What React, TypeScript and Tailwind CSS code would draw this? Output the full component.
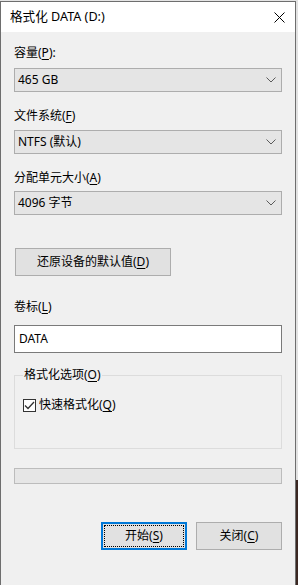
import { ReactNode } from 'react'

const FONT = '"Noto Sans", "Noto Sans CJK SC", sans-serif'

function Key({ k }: { k: string }) {
  return <span className="underline underline-offset-[2px] decoration-[1px]">{k}</span>
}

function Chevron() {
  return (
    <svg width="10" height="6" viewBox="0 0 10 6" className="shrink-0">
      <path d="M0.5 0.5 L5 5 L9.5 0.5" fill="none" stroke="#5a5a5a" strokeWidth="1" />
    </svg>
  )
}

function Combo({ value, className }: { value: string; className?: string }) {
  return (
    <div
      className={`h-[24px] bg-[#e5e5e5] border border-[#adadad] flex items-center justify-between pl-[3px] pr-[5px] ${className ?? ''}`}
    >
      <span className="text-[12px] leading-[16px] text-black">{value}</span>
      <Chevron />
    </div>
  )
}

function Label({ children, className }: { children: ReactNode; className?: string }) {
  return <div className={`text-[12px] leading-[16px] text-black ${className ?? ''}`}>{children}</div>
}

export default function App() {
  return (
    <div className="w-[298px] h-[585px] flex overflow-hidden bg-[#e4e4e4]" style={{ fontFamily: FONT }}>
      <div className="w-[296px] h-[585px] pt-[1px] flex flex-col">
        <div className="flex-1 flex flex-col border border-b-0 border-[#6e6e6e] bg-[#f0f0f0]">
          {/* title bar */}
          <div className="h-[30px] bg-white flex items-center justify-between pl-[9px] pr-[10px] shrink-0">
            <span className="text-[12.6px] leading-[16px] text-black">格式化 DATA (D:)</span>
            <svg width="11" height="11" viewBox="0 0 11 11">
              <path d="M0.5 0.5 L10.5 10.5 M10.5 0.5 L0.5 10.5" stroke="#000" strokeWidth="1" />
            </svg>
          </div>

          <div className="px-[13px] pt-[13px] flex flex-col">
            <Label>
              容量(<Key k="P" />):
            </Label>
            <Combo value="465 GB" className="mt-[7px]" />

            <Label className="mt-[16px]">
              文件系统(<Key k="F" />)
            </Label>
            <Combo value="NTFS (默认)" className="mt-[6px]" />

            <Label className="mt-[16px]">
              分配单元大小(<Key k="A" />)
            </Label>
            <Combo value="4096 字节" className="mt-[5px]" />

            <button className="mt-[33px] ml-[1px] w-[156px] h-[28px] bg-[#e1e1e1] border border-[#adadad] text-[12px] leading-[16px] text-black">
              还原设备的默认值(<Key k="D" />)
            </button>

            <Label className="mt-[23px]">
              卷标(<Key k="L" />)
            </Label>
            <div className="mt-[10px] h-[28px] bg-white border border-[#7a7a7a] flex items-center pl-[4px]">
              <span className="text-[12px] leading-[16px] text-black">DATA</span>
            </div>

            <fieldset className="mt-[15px] h-[81px] border border-[#dcdcdc] pl-[8px] pr-[8px] m-0 min-w-0">
              <legend className="px-[1px] text-[12px] leading-[14px] text-black">
                格式化选项(<Key k="O" />)
              </legend>
              <div className="mt-[15px] flex items-center gap-[3px]">
                <div className="w-[13px] h-[13px] border border-[#333] bg-white flex items-center justify-center">
                  <svg width="11" height="9" viewBox="0 0 11 9">
                    <path d="M1 4.5 L4 7.5 L10 1" fill="none" stroke="#333" strokeWidth="1.3" />
                  </svg>
                </div>
                <span className="text-[12px] leading-[16px] text-black">
                  快速格式化(<Key k="Q" />)
                </span>
              </div>
            </fieldset>

            <div className="mt-[19px] h-[16px] bg-[#e6e6e6] border border-[#bcbcbc]" />

            <div className="mt-[38px] flex justify-end gap-[9px]">
              <button className="w-[86px] h-[28px] bg-[#e1e1e1] border-2 border-[#0078d7] p-[1px] text-[12px] leading-[16px] text-black">
                <div className="w-full h-full border border-dotted border-black flex items-center justify-center">
                  <span>
                    开始(<Key k="S" />)
                  </span>
                </div>
              </button>
              <button className="w-[86px] h-[28px] bg-[#e1e1e1] border border-[#adadad] text-[12px] leading-[16px] text-black">
                关闭(<Key k="C" />)
              </button>
            </div>
          </div>
        </div>
      </div>
      <div className="w-[2px] h-[585px] flex flex-col">
        <div className="h-[480px] bg-[#e2e2e2]" />
        <div className="flex-1 bg-[#3b2722]" />
      </div>
    </div>
  )
}
